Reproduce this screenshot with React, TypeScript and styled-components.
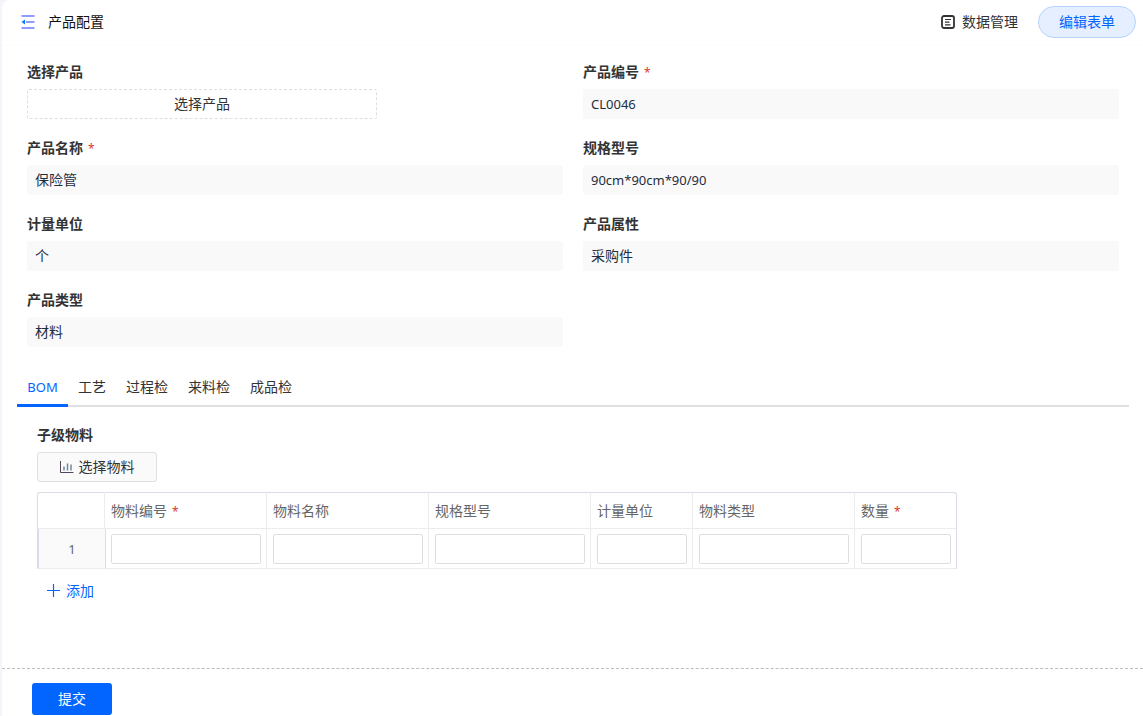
import React, { useState } from 'react';
import styled, { createGlobalStyle, css } from 'styled-components';

const GlobalStyle = createGlobalStyle`
  *, *::before, *::after { box-sizing: border-box; }
  body {
    margin: 0;
    background: #f4f4fb;
    color: #333;
    font-family: "Noto Sans CJK SC", sans-serif;
    font-size: 14px;
    line-height: 20px;
  }
  button, input { font: inherit; color: inherit; margin: 0; }
  button { cursor: pointer; padding: 0 0 2px; }
`;

const Page = styled.div`
  display: flex;
  flex-direction: column;
  min-height: 100vh;
  margin-left: 2px;
  background: #fff;
  border-top-left-radius: 8px;
`;

const Header = styled.header`
  display: flex;
  align-items: center;
  justify-content: space-between;
  height: 46px;
  padding: 0 7px 2px 19px;
  border-bottom: 1px solid #fcfcfc;
`;

const HeaderGroup = styled.div<{ $gap: number }>`
  display: flex;
  align-items: center;
  gap: ${(p) => p.$gap}px;
`;

const Title = styled.h1`
  margin: 0;
  padding-bottom: 2px;
  font-size: 14px;
  font-weight: 400;
  color: #111;
`;

const PlainButton = styled.button`
  display: inline-flex;
  align-items: center;
  gap: 7px;
  padding: 0;
  border: 0;
  background: none;
`;

const ButtonText = styled.span`
  padding-bottom: 2px;
`;

const EditButton = styled.button`
  width: 98px;
  height: 32px;
  border: 1px solid #b8d4ff;
  border-radius: 16px;
  background: #e5efff;
  color: #0265ff;
`;

const Content = styled.main`
  flex: 1;
  padding: 15px 14px 0 15px;
`;

const FieldGrid = styled.div`
  display: grid;
  grid-template-columns: 1fr 1fr;
  gap: 18px 20px;
  padding: 0 10px;
`;

const FieldBox = styled.div`
  display: flex;
  flex-direction: column;
  align-items: flex-start;
  gap: 8px;
`;

const labelText = css`
  font-size: 14px;
  font-weight: 700;
  color: #333;
`;

const Label = styled.label`
  ${labelText}
`;

const Caption = styled.span`
  ${labelText}
`;

const Required = styled.span`
  margin-left: 5px;
  font-family: "Noto Sans", sans-serif;
  font-size: 12px;
  font-weight: 400;
  line-height: 1;
  color: #d8382e;
`;

const ValueInput = styled.input`
  width: 100%;
  height: 30px;
  padding: 0 8px 2px;
  border: 0;
  border-radius: 2px;
  background: #f9f9f9;
  color: #1f2d3d;
  outline: none;
`;

const LatinValueInput = styled(ValueInput)`
  padding-bottom: 0;
  font-family: "Noto Sans", "Noto Sans CJK SC", sans-serif;
  font-size: 13px;
`;

const PickButton = styled.button`
  width: 350px;
  max-width: 100%;
  height: 30px;
  border: 1px dashed #dedede;
  border-radius: 2px;
  background: #fff;
`;

const TabList = styled.div`
  display: flex;
  height: 36px;
  margin-top: 24px;
  box-shadow: inset 0 -2px #e0e0e0;
`;

const Tab = styled.button<{ $active: boolean }>`
  min-width: 48px;
  padding: 0 10px 4px;
  border: 0;
  border-bottom: 3px solid ${(p) => (p.$active ? '#0265ff' : 'transparent')};
  background: none;
  color: ${(p) => (p.$active ? '#0265ff' : '#333')};
`;

const LatinTab = styled(Tab)`
  min-width: 51px;
  padding-bottom: 2px;
  font-family: "Noto Sans", sans-serif;
  font-size: 13px;
`;

const TabPanel = styled.section`
  display: flex;
  flex-direction: column;
  align-items: flex-start;
  padding: 17px 20px 24px;
`;

const MaterialButton = styled.button`
  display: flex;
  align-items: center;
  justify-content: center;
  gap: 5px;
  width: 120px;
  height: 30px;
  margin: 8px 0 10px;
  padding: 0;
  border: 1px solid #e0e0e0;
  border-radius: 3px;
  background: #fafafa;
`;

const Scroller = styled.div`
  max-width: 100%;
  overflow-x: auto;
`;

const Table = styled.table`
  width: 920px;
  table-layout: fixed;
  border-collapse: separate;
  border-spacing: 0;
`;

const Col = styled.col<{ $width: number }>`
  width: ${(p) => p.$width}px;
`;

const HeadCell = styled.th`
  height: 37px;
  padding: 0 6px 2px;
  border: solid #ececec;
  border-width: 1px 1px 1px 0;
  border-top-color: #dcdce6;
  text-align: left;
  font-weight: 400;
  color: #666;
  &:first-child { border-left: 1px solid #dcdce6; border-top-left-radius: 3px; }
  &:last-child { border-right-color: #dcdce6; border-top-right-radius: 3px; }
`;

const IndexCell = styled.th`
  padding: 0;
  border-left: 2px solid #dcdce6;
  border-bottom: 1px solid #ececec;
  background: #fafafa;
  font-family: "Noto Sans", sans-serif;
  font-size: 13px;
  font-weight: 400;
  color: #666;
`;

const BodyCell = styled.td`
  height: 40px;
  padding: 5px 5px 4px 6px;
  border: solid #ececec;
  border-width: 0 1px 1px 0;
  &:nth-child(2) { border-left: 1px solid #dcdce6; padding-left: 5px; }
  &:last-child { border-right-color: #dcdce6; }
`;

const CellInput = styled.input`
  display: block;
  width: 100%;
  height: 30px;
  padding: 0 8px;
  border: 1px solid #dedede;
  border-radius: 2px;
  background: #fff;
`;

const AddButton = styled(PlainButton)`
  gap: 6px;
  margin: 11px 0 0 9px;
  color: #0265ff;
`;

const Footer = styled.footer`
  padding: 14px 30px 1px;
  border-top: 1px dashed #bdbdbd;
`;

const SubmitButton = styled.button`
  width: 80px;
  height: 32px;
  border: 0;
  border-radius: 3px;
  background: #0265ff;
  color: #fff;
`;

const Icon = styled.svg`
  display: block;
  flex: none;
`;

const MenuIcon = () => (
  <Icon width="14" height="14" viewBox="0 0 14 14" aria-hidden="true">
    <path d="M0.5 1h13M5 7h8.5M0.5 13h13" stroke="#8f9bff" strokeWidth="2" />
    <path d="M0.5 7L4 4.5v5z" fill="#0878ff" />
  </Icon>
);

const DataIcon = () => (
  <Icon width="14" height="14" viewBox="0 0 14 14" fill="none" stroke="#333" aria-hidden="true">
    <rect x="1" y="1" width="12" height="12" rx="2" strokeWidth="1.8" />
    <path d="M4 4.5h6M4 7.2h4.5M4 9.8h5.5" strokeWidth="1.2" />
  </Icon>
);

const ChartIcon = () => (
  <Icon width="14" height="14" viewBox="0 0 14 14" fill="none" aria-hidden="true">
    <path d="M0.5 1v11.5h13" stroke="#54465c" />
    <path d="M4 6.5v4M7.5 3.5v7M11 4.5v6" stroke="#718696" strokeWidth="1.5" />
  </Icon>
);

const PlusIcon = () => (
  <Icon width="14" height="14" viewBox="0 0 14 14" aria-hidden="true">
    <path d="M7.5 0v13M1 6.5h13" stroke="#0265ff" strokeWidth="1.2" />
  </Icon>
);

interface FieldProps {
  id: string;
  label: string;
  value: string;
  required?: boolean;
  latin?: boolean;
}

function Field({ id, label, value, required, latin }: FieldProps) {
  const Control = latin ? LatinValueInput : ValueInput;
  return (
    <FieldBox>
      <Label htmlFor={id}>
        {label}
        {required && <Required>*</Required>}
      </Label>
      <Control id={id} value={value} readOnly />
    </FieldBox>
  );
}

const fields: FieldProps[] = [
  { id: 'code', label: '产品编号', value: 'CL0046', required: true, latin: true },
  { id: 'name', label: '产品名称', value: '保险管', required: true },
  { id: 'spec', label: '规格型号', value: '90cm*90cm*90/90', latin: true },
  { id: 'unit', label: '计量单位', value: '个' },
  { id: 'attribute', label: '产品属性', value: '采购件' },
  { id: 'type', label: '产品类型', value: '材料' },
];

const tabs = ['BOM', '工艺', '过程检', '来料检', '成品检'];

const columns = [
  { name: '物料编号', width: 162, required: true },
  { name: '物料名称', width: 162 },
  { name: '规格型号', width: 162 },
  { name: '计量单位', width: 102 },
  { name: '物料类型', width: 162 },
  { name: '数量', width: 102, required: true },
];

export default function App() {
  const [active, setActive] = useState('BOM');
  const [rows, setRows] = useState([1]);

  return (
    <>
      <GlobalStyle />
      <Page>
        <Header>
          <HeaderGroup $gap={13}>
            <MenuIcon />
            <Title>产品配置</Title>
          </HeaderGroup>
          <HeaderGroup $gap={20}>
            <PlainButton type="button">
              <DataIcon />
              <ButtonText>数据管理</ButtonText>
            </PlainButton>
            <EditButton type="button">编辑表单</EditButton>
          </HeaderGroup>
        </Header>

        <Content>
          <FieldGrid>
            <FieldBox>
              <Label htmlFor="pick">选择产品</Label>
              <PickButton id="pick" type="button">选择产品</PickButton>
            </FieldBox>
            {fields.map((f) => (
              <Field key={f.id} {...f} />
            ))}
          </FieldGrid>

          <TabList role="tablist">
            {tabs.map((t) => {
              const Item = t === 'BOM' ? LatinTab : Tab;
              return (
                <Item
                  key={t}
                  type="button"
                  role="tab"
                  aria-selected={t === active}
                  $active={t === active}
                  onClick={() => setActive(t)}
                >
                  {t}
                </Item>
              );
            })}
          </TabList>

          <TabPanel role="tabpanel">
            <Caption>子级物料</Caption>
            <MaterialButton type="button">
              <ChartIcon />
              <ButtonText>选择物料</ButtonText>
            </MaterialButton>
            <Scroller>
              <Table>
                <colgroup>
                  <Col $width={68} />
                  {columns.map((c) => (
                    <Col key={c.name} $width={c.width} />
                  ))}
                </colgroup>
                <thead>
                  <tr>
                    <HeadCell />
                    {columns.map((c) => (
                      <HeadCell key={c.name} scope="col">
                        {c.name}
                        {c.required && <Required>*</Required>}
                      </HeadCell>
                    ))}
                  </tr>
                </thead>
                <tbody>
                  {rows.map((r) => (
                    <tr key={r}>
                      <IndexCell scope="row">{r}</IndexCell>
                      {columns.map((c) => (
                        <BodyCell key={c.name}>
                          <CellInput aria-label={c.name} />
                        </BodyCell>
                      ))}
                    </tr>
                  ))}
                </tbody>
              </Table>
            </Scroller>
            <AddButton type="button" onClick={() => setRows([...rows, rows.length + 1])}>
              <PlusIcon />
              <ButtonText>添加</ButtonText>
            </AddButton>
          </TabPanel>
        </Content>

        <Footer>
          <SubmitButton type="submit">提交</SubmitButton>
        </Footer>
      </Page>
    </>
  );
}
